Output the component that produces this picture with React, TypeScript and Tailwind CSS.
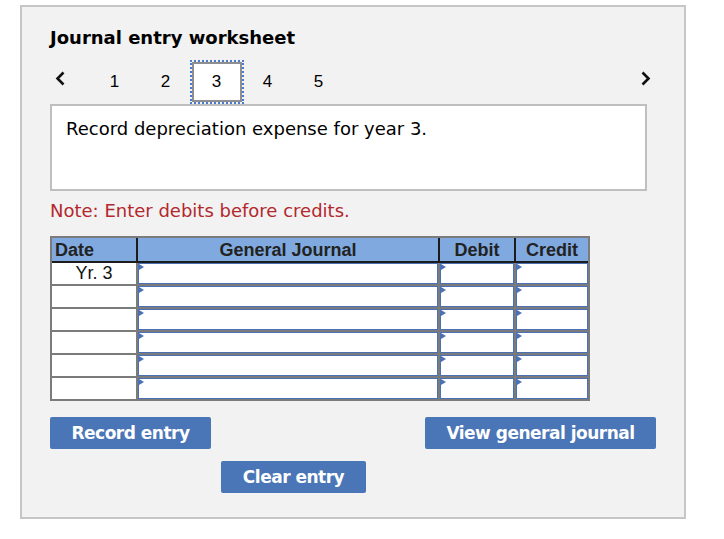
import React from "react";

export default function App() {
  return (
    <div className="w-[724px] h-[539px] bg-white pt-[5px] pl-[20px]">
      <div className="w-[666px] h-[514px] bg-[#f2f2f2] border-2 border-[#c6c6c6] pt-[21px] pl-[28px] pr-[28px] font-['DejaVu_Sans',Verdana,sans-serif]">
        <div className="h-[20px] leading-[20px] text-[18px] font-bold text-black">
          Journal entry worksheet
        </div>
        <StepNav />
        <div className="w-[597px] h-[87px] bg-white border-2 border-[#bfbfbf] pl-[14px] pt-[13px] text-[18px] leading-[20px] text-black">
          Record depreciation expense for year 3.
        </div>
        <div className="mt-[10px] text-[18px] leading-[20px] text-[#b3282d]">
          Note: Enter debits before credits.
        </div>
        <JournalTable />
        <div className="flex justify-between mt-[16px]">
          <ActionButton label="Record entry" width="w-[161px]" />
          <ActionButton label="View general journal" width="w-[231px]" />
        </div>
        <div className="mt-[12px] ml-[171px]">
          <ActionButton label="Clear entry" width="w-[145px]" />
        </div>
      </div>
    </div>
  );
}

function StepNav() {
  const steps = [1, 2, 3, 4, 5];
  return (
    <div className="flex items-start h-[44px] mt-[12px] font-['Liberation_Sans',Arial,sans-serif] text-[17px] text-black">
      <div className="w-[39px] pl-[5px] pt-[11px]">
        <svg width="11" height="15" viewBox="0 0 11 15">
          <polyline points="8.5,1.5 2.5,7.5 8.5,13.5" fill="none" stroke="#111" strokeWidth="2.6" />
        </svg>
      </div>
      {steps.map((s) =>
        s === 3 ? (
          <div key={s} className="w-[51px] flex justify-center">
            <div className="w-[50px] h-[40px] mt-[2px] bg-white border-2 border-[#8f8f8f] outline-2 outline-dotted outline-[#4b7bd1] flex items-center justify-center">
              {s}
            </div>
          </div>
        ) : (
          <div key={s} className="w-[51px] h-[44px] flex items-center justify-center">
            {s}
          </div>
        )
      )}
      <div className="ml-auto mr-[5px] pt-[11px]">
        <svg width="11" height="15" viewBox="0 0 11 15">
          <polyline points="2.5,1.5 8.5,7.5 2.5,13.5" fill="none" stroke="#111" strokeWidth="2.6" />
        </svg>
      </div>
    </div>
  );
}

function JournalTable() {
  const rows = ["Yr. 3", "", "", "", "", ""];
  return (
    <div className="mt-[15px] w-[540px] bg-[#7b7b7b] p-[2px] font-['Liberation_Sans',Arial,sans-serif]">
      <div className="flex h-[25px] bg-[#80aadf] border-b-2 border-[#1c1c1c] text-[18px] font-bold text-[#222] leading-[24px]">
        <div className="w-[86px] border-r-2 border-[#1c1c1c] pl-[3px]">Date</div>
        <div className="w-[302px] border-r-2 border-[#1c1c1c] text-center">General Journal</div>
        <div className="w-[76px] border-r-2 border-[#1c1c1c] text-center">Debit</div>
        <div className="flex-1 text-center">Credit</div>
      </div>
      <div className="flex flex-col gap-[2px]">
        {rows.map((d, i) => (
          <div key={i} className="flex gap-[2px] h-[21px]">
            <div className="w-[84px] bg-white text-center text-[18px] leading-[21px] text-[#111]">{d}</div>
            <InputCell width="w-[300px]" />
            <InputCell width="w-[74px]" />
            <InputCell width="flex-1" />
          </div>
        ))}
      </div>
    </div>
  );
}

function InputCell({ width }: { width: string }) {
  return (
    <div className={`${width} relative bg-white border border-[#4a70b6]`}>
      <svg className="absolute left-0 top-0" width="5" height="7" viewBox="0 0 5 7">
        <polygon points="0,0 5,3 0,6" fill="#4a70b6" />
      </svg>
    </div>
  );
}

function ActionButton({ label, width }: { label: string; width: string }) {
  return (
    <button className={`${width} h-[32px] bg-[#4a75b6] rounded-[2px] text-white font-bold text-[17px] tracking-[-0.5px] leading-[32px] text-center`}>
      {label}
    </button>
  );
}
